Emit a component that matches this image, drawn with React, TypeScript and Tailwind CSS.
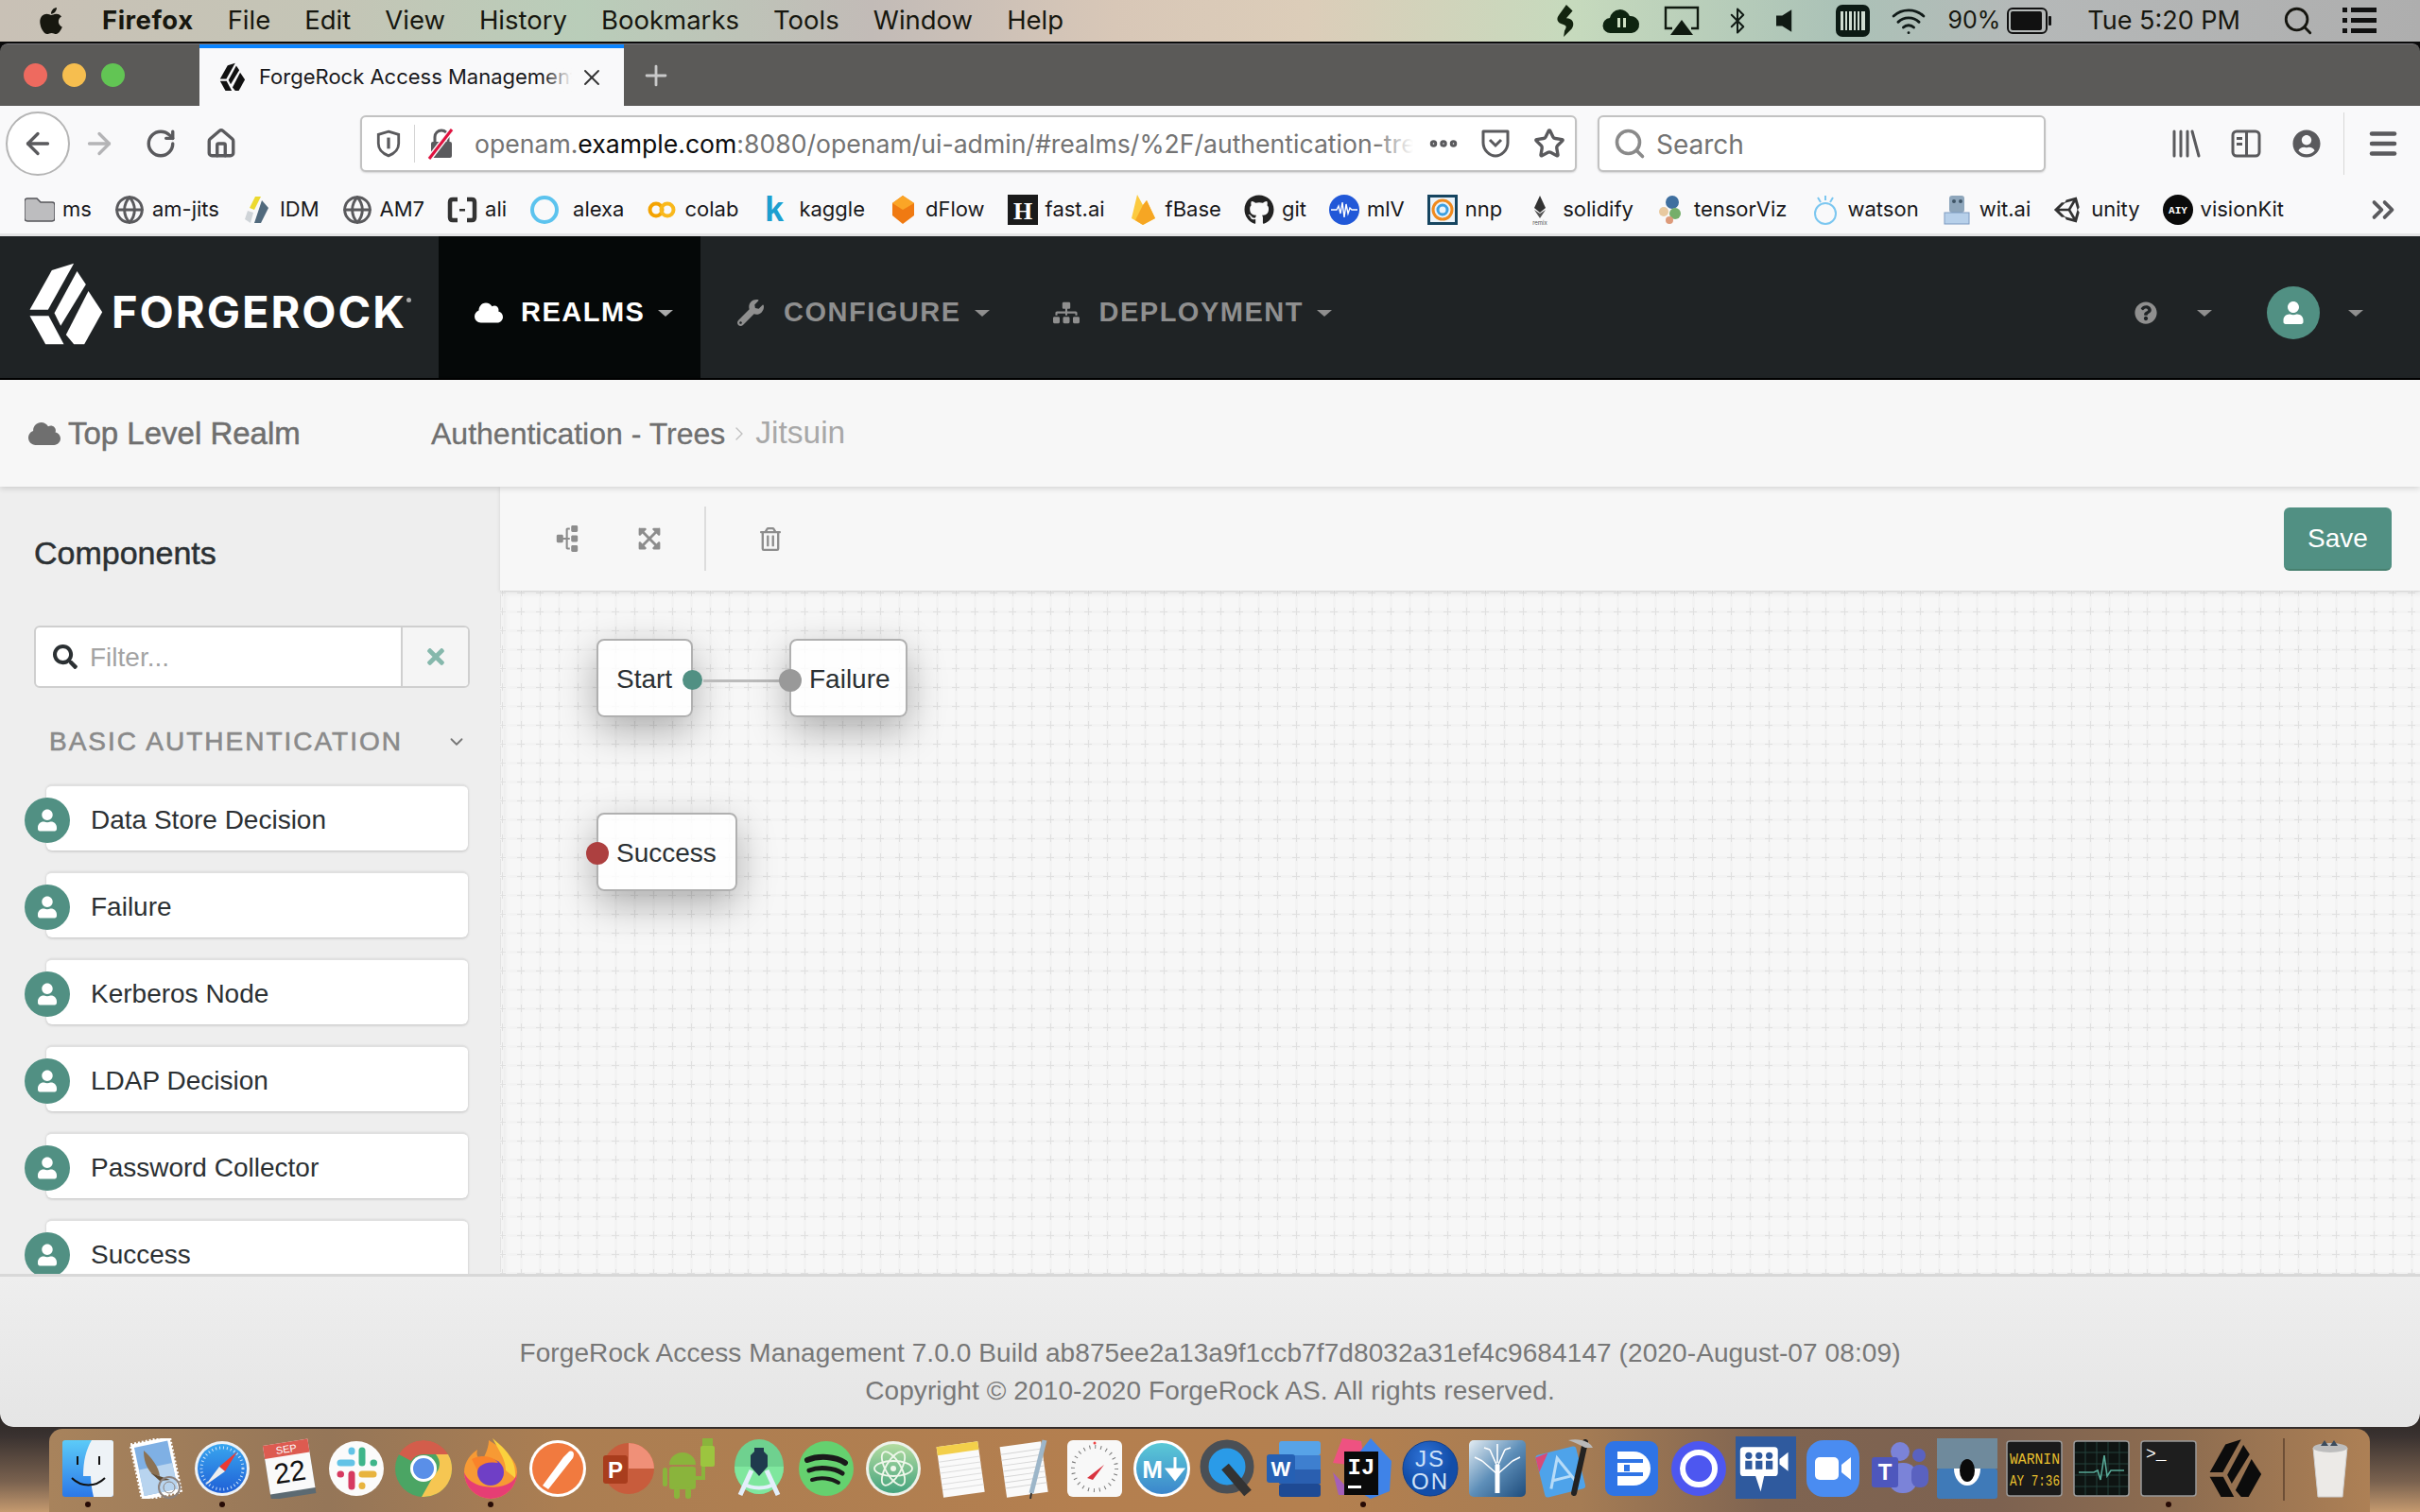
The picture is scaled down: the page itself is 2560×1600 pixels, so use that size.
import React from 'react';
import { ArrowLeft, ArrowRight, RotateCw, Home, Star, Menu, ChevronsRight, ChevronRight, Search, Globe, Bluetooth, Wifi, X, Plus, ChevronDown, Ellipsis } from 'lucide-react';
import { FaApple, FaCloud, FaWrench, FaSitemap, FaUser, FaQuestionCircle, FaSearch, FaTimes, FaExpandArrowsAlt, FaRegTrashAlt, FaGithub, FaUnity, FaUserCircle, FaFolder } from 'react-icons/fa';

const FrMark = ({ className }: { className?: string }) => (
  <svg viewBox="85 80 245 270" className={className} fill="currentColor">
    <polygon points="162,107 232,85 150,232 92,232" />
    <polygon points="242,110 270,152 190,283 170,243" />
    <polygon points="278,173 322,240 265,342 232,342 207,312" />
    <polygon points="92,252 152,252 200,342 142,342" />
  </svg>
);

const Caret = ({ className }: { className?: string }) => (
  <span className={`inline-block w-0 h-0 border-x-[8px] border-x-transparent border-t-[7px] border-t-[#8f8f8f] ${className ?? ''}`} />
);

const menuItems = ['File', 'Edit', 'View', 'History', 'Bookmarks', 'Tools', 'Window', 'Help'];

const MenuBar = () => (
  <div className="h-[44px] shrink-0 flex items-center pl-[40px] text-[27.5px] text-[#17170f] bg-[linear-gradient(90deg,#c9c1b6_0%,#c4c5b6_14%,#b9cdb9_24%,#c2bbb7_36%,#d8c7b7_46%,#dccdb9_54%,#c6dabd_65%,#abc2b7_76%,#b5b8b8_84%,#aeaeae_100%)]">
    <FaApple className="w-[28px] h-[32px] mr-[40px]" />
    <span className="font-bold tracking-[0.5px]">Firefox</span>
    {menuItems.map((m) => (
      <span key={m} className="ml-[36px]">{m}</span>
    ))}
    <div className="flex-1" />
    <svg viewBox="0 0 24 36" className="w-[24px] h-[34px]"><path d="M13 0 L20 7 L13 15 C20 15 23 21 19 27 L10 36 L11 29 C14 25 13 23 9 22 C3 20 1 16 5 11Z" fill="#13240f" /></svg>
    <svg viewBox="0 0 40 30" className="w-[40px] h-[30px] ml-[27px]"><path d="M9 28a8 8 0 0 1-1-16 11 11 0 0 1 21-2 9 9 0 0 1 2 18Z" fill="#0e2410" /><rect x="16" y="12" width="3" height="10" fill="#cfe0c4" /><rect x="22" y="12" width="3" height="10" fill="#cfe0c4" /></svg>
    <svg viewBox="0 0 38 32" className="w-[38px] h-[32px] ml-[25px]"><path d="M9 24H2V2H36V24H29" fill="none" stroke="#101a10" strokeWidth="2.4" /><polygon points="19,15 31,31 7,31" fill="#101a10" /></svg>
    <Bluetooth className="w-[30px] h-[36px] ml-[25px] text-[#101a14]" strokeWidth={1.6} />
    <svg viewBox="0 0 20 28" className="w-[18px] h-[26px] ml-[26px]"><polygon points="0,8 7,8 18,1 18,27 7,20 0,20" fill="#101a14" /></svg>
    <svg viewBox="0 0 36 34" className="w-[36px] h-[34px] ml-[45px]"><rect width="36" height="34" rx="7" fill="#0c1a14" /><rect x="5" y="7" width="3" height="20" fill="#cfdcd0" /><rect x="10" y="7" width="2" height="20" fill="#cfdcd0" /><rect x="14" y="7" width="3" height="20" fill="#cfdcd0" /><rect x="19" y="7" width="2" height="20" fill="#cfdcd0" /><rect x="23" y="7" width="2" height="20" fill="#cfdcd0" /><rect x="27" y="7" width="4" height="20" fill="#cfdcd0" /></svg>
    <Wifi className="w-[44px] h-[38px] ml-[19px] text-[#101a18]" strokeWidth={1.8} />
    <span className="ml-[20px] text-[25px]">90%</span>
    <svg viewBox="0 0 48 28" className="w-[48px] h-[28px] ml-[7px]"><rect x="1" y="1" width="41" height="26" rx="5" fill="none" stroke="#111" strokeWidth="2" /><rect x="4" y="4" width="33" height="20" rx="2" fill="#111" /><rect x="44" y="9" width="3" height="10" rx="1" fill="#111" /></svg>
    <span className="ml-[37px] text-[27px]">Tue 5:20 PM</span>
    <Search className="w-[34px] h-[34px] ml-[44px] text-[#15150f]" strokeWidth={2} />
    <svg viewBox="0 0 36 28" className="w-[36px] h-[28px] ml-[30px] mr-[46px]"><g fill="#111"><rect width="5" height="5" /><rect y="11" width="5" height="5" /><rect y="22" width="5" height="5" /><rect x="9" width="27" height="5" /><rect x="9" y="11" width="27" height="5" /><rect x="9" y="22" width="27" height="5" /></g></svg>
  </div>
);

const TabStrip = () => (
  <div className="h-[66px] shrink-0 flex bg-[#5b5a58] rounded-t-[8px] border-t border-[#77767a]">
    <div className="w-[211px] flex items-center pl-[25px] gap-[16px]">
      <span className="w-[25px] h-[25px] rounded-full bg-[#ee6a5f]" />
      <span className="w-[25px] h-[25px] rounded-full bg-[#f6be4f]" />
      <span className="w-[25px] h-[25px] rounded-full bg-[#62c554]" />
    </div>
    <div className="w-[449px] bg-[#f9f9fa] border-t-[4px] border-[#0a84ff] flex items-center pl-[21px]">
      <FrMark className="w-[28px] h-[31px] text-[#111] shrink-0" />
      <div className="relative w-[331px] ml-[14px] overflow-hidden whitespace-nowrap text-[22px] text-[#18181a]">
        ForgeRock Access Management 7
        <span className="absolute right-0 top-0 bottom-0 w-[30px] bg-gradient-to-r from-transparent to-[#f9f9fa]" />
      </div>
      <X className="w-[28px] h-[28px] ml-[7px] text-[#333]" strokeWidth={1.6} />
    </div>
    <div className="flex items-center ml-[17px]">
      <Plus className="w-[34px] h-[34px] text-[#c9c9c9]" strokeWidth={2} />
    </div>
  </div>
);

const UrlBar = () => (
  <div className="h-[80px] shrink-0 bg-[#f9f9fa] flex items-center text-[#5a5a5d]">
    <div className="w-[68px] h-[68px] ml-[6px] rounded-full border-2 border-[#b5b5b5] bg-white flex items-center justify-center">
      <ArrowLeft className="w-[36px] h-[36px]" strokeWidth={2.2} />
    </div>
    <ArrowRight className="w-[36px] h-[36px] ml-[13px] text-[#b4b4b6]" strokeWidth={2.2} />
    <RotateCw className="w-[34px] h-[34px] ml-[30px]" strokeWidth={2.4} />
    <Home className="w-[34px] h-[34px] ml-[30px]" strokeWidth={2.4} />
    <div className="w-[1287px] h-[60px] ml-[130px] rounded-[6px] border-2 border-[#c2c2c2] bg-white flex items-center shadow-[0_1px_2px_rgba(0,0,0,0.15)]">
      <svg viewBox="0 0 24 28" className="w-[26px] h-[30px] ml-[15px] shrink-0"><path d="M12 2 L22 5 V14 C22 20 17 24 12 26 C7 24 2 20 2 14 V5Z" fill="none" stroke="#5a5a5d" strokeWidth="2.6" /><rect x="10.5" y="8" width="3" height="11" fill="#5a5a5d" /></svg>
      <span className="w-px h-[40px] bg-[#d4d4d4] ml-[14px] shrink-0" />
      <svg viewBox="0 0 30 34" className="w-[30px] h-[34px] ml-[13px] shrink-0"><path d="M8 15V10a7 7 0 0 1 14 0v5" fill="none" stroke="#5a5a5d" strokeWidth="3" /><rect x="4" y="15" width="22" height="17" rx="2" fill="#5a5a5d" /><line x1="2" y1="33" x2="26" y2="2" stroke="#f9f9fa" strokeWidth="6" /><line x1="2" y1="33" x2="26" y2="2" stroke="#e0123f" strokeWidth="3" /></svg>
      <div className="relative w-[993px] ml-[20px] pt-[2px] overflow-hidden whitespace-nowrap text-[26.6px] text-[#737373]">
        openam.<span className="text-[#0c0c0d]">example.com</span>:8080/openam/ui-admin/#realms/%2F/authentication-trees
        <span className="absolute right-0 top-0 bottom-0 w-[40px] bg-gradient-to-r from-transparent to-white" />
      </div>
      <Ellipsis className="w-[36px] h-[36px] ml-[14px]" strokeWidth={3} />
      <svg viewBox="0 0 32 32" className="w-[32px] h-[32px] ml-[21px]"><path d="M3 3H29V15C29 23 22 29 16 29C10 29 3 23 3 15Z" fill="none" stroke="#5a5a5d" strokeWidth="3" strokeLinejoin="round" /><path d="M10 12 L16 18 L22 12" fill="none" stroke="#5a5a5d" strokeWidth="3" /></svg>
      <Star className="w-[34px] h-[34px] ml-[24px]" strokeWidth={2.4} />
    </div>
    <div className="w-[474px] h-[60px] ml-[22px] rounded-[6px] border-2 border-[#c2c2c2] bg-white flex items-center text-[28px] text-[#737373] shadow-[0_1px_2px_rgba(0,0,0,0.15)]">
      <Search className="w-[36px] h-[36px] ml-[14px] text-[#8a8a8a]" strokeWidth={2.4} />
      <span className="ml-[10px] pt-[2px]">Search</span>
    </div>
    <svg viewBox="0 0 32 32" className="w-[32px] h-[32px] ml-[133px]"><g stroke="#5a5a5d" strokeWidth="3" strokeLinecap="round"><line x1="3" y1="3" x2="3" y2="29" /><line x1="10" y1="3" x2="10" y2="29" /><line x1="17" y1="3" x2="17" y2="29" /><line x1="22" y1="3" x2="29" y2="29" /></g></svg>
    <svg viewBox="0 0 32 32" className="w-[32px] h-[32px] ml-[31px]"><rect x="2" y="3" width="28" height="26" rx="4" fill="none" stroke="#5a5a5d" strokeWidth="3" /><rect x="15" y="3" width="3" height="26" fill="#5a5a5d" /><rect x="6" y="9" width="6" height="3" fill="#5a5a5d" /><rect x="6" y="15" width="6" height="3" fill="#5a5a5d" /></svg>
    <FaUserCircle className="w-[30px] h-[30px] ml-[33px]" />
    <span className="w-px h-[66px] bg-[#d8d8d8] ml-[24px]" />
    <Menu className="w-[36px] h-[36px] ml-[23px]" strokeWidth={3} />
  </div>
);

const Box = ({ children, v = '0 0 32 32' }: { children: React.ReactNode; v?: string }) => (
  <svg viewBox={v} className="w-[32px] h-[32px] shrink-0">{children}</svg>
);

const bookmarks: { label: string; gap?: string; icon: React.ReactNode }[] = [
  { label: 'ms', icon: <FaFolder className="w-[32px] h-[32px] text-[#bdbdbf] stroke-[#55555a] stroke-[24px]" /> },
  { label: 'am-jits', icon: <Globe className="w-[32px] h-[32px] text-[#5a5a5d]" strokeWidth={2.2} /> },
  { label: 'IDM', icon: <Box><polygon points="14,2 20,2 13,16 8,14" fill="#ecd92f" /><polygon points="6,17 12,19 9,30 3,26" fill="#cfd4d8" /><polygon points="21,6 28,14 20,30 13,30" fill="#516a7d" /></Box> },
  { label: 'AM7', icon: <Globe className="w-[32px] h-[32px] text-[#5a5a5d]" strokeWidth={2.2} /> },
  { label: 'ali', icon: <Box><path d="M11 5H6Q3 5 3 8V24Q3 27 6 27H11M21 5H26Q29 5 29 8V24Q29 27 26 27H21" fill="none" stroke="#333" strokeWidth="4.5" /><rect x="13" y="15" width="6" height="2.5" fill="#333" /></Box> },
  { label: 'alexa', gap: 'gap-[14px]', icon: <Box><circle cx="16" cy="16" r="13" fill="none" stroke="#5cc3ee" strokeWidth="4" /></Box> },
  { label: 'colab', icon: <Box><circle cx="10" cy="16" r="6.5" fill="none" stroke="#f4a300" strokeWidth="4" /><circle cx="22" cy="16" r="6.5" fill="none" stroke="#f9b81c" strokeWidth="4" /></Box> },
  { label: 'kaggle', icon: <Box><text x="14" y="28" textAnchor="middle" fontSize="36" fontWeight="bold" fontFamily="Liberation Sans, sans-serif" fill="#1d9fd0">k</text></Box> },
  { label: 'dFlow', icon: <Box><polygon points="16,1 28,9 28,22 16,31 5,22 5,9" fill="#f07a12" /><polygon points="16,1 28,9 16,16 5,9" fill="#fba526" /></Box> },
  { label: 'fast.ai', icon: <Box><rect width="32" height="32" fill="#1a1a1a" /><text x="16" y="26" textAnchor="middle" fontSize="26" fontWeight="bold" fontFamily="Liberation Serif, serif" fill="#fff">H</text></Box> },
  { label: 'fBase', icon: <Box><polygon points="4,25 10,0 16,11 20,6 29,25 16,32" fill="#fcca3f" /><polygon points="16,11 20,6 29,25 16,32 8,27" fill="#f6a623" /></Box> },
  { label: 'git', icon: <FaGithub className="w-[32px] h-[32px] text-[#222]" /> },
  { label: 'mlV', icon: <Box><circle cx="16" cy="16" r="16" fill="#2158d8" /><path d="M2 16h6l2-4 2 8 2-12 2 16 2-14 2 10 2-6 2 2h6" fill="none" stroke="#fff" strokeWidth="1.4" /></Box> },
  { label: 'nnp', icon: <Box><rect width="32" height="32" fill="#164560" /><rect x="3" y="3" width="26" height="26" fill="#eaf3fa" /><circle cx="16" cy="16" r="10" fill="none" stroke="#f08a1d" strokeWidth="3" /><circle cx="16" cy="16" r="5" fill="none" stroke="#3d9fe0" strokeWidth="3" /></Box> },
  { label: 'solidify', icon: <Box><polygon points="16,1 22,14 16,19 10,14" fill="#333" /><polygon points="10,16 16,20 22,16 16,25" fill="#555" /><text x="16" y="32" textAnchor="middle" fontSize="6" fontFamily="Inter, sans-serif" fill="#555">remix</text></Box> },
  { label: 'tensorViz', icon: <Box><circle cx="17" cy="8" r="7" fill="#3f6f9f" /><circle cx="8" cy="18" r="5" fill="#e8c9a0" /><circle cx="20" cy="20" r="6" fill="#75ae6a" /><circle cx="14" cy="27" r="4" fill="#dd9a7a" /></Box> },
  { label: 'watson', icon: <Box><circle cx="16" cy="20" r="11" fill="none" stroke="#7cc7f0" strokeWidth="2" /><path d="M16 1v5M8 3l3 5M24 3l-3 5" stroke="#7cc7f0" strokeWidth="2" /></Box> },
  { label: 'wit.ai', icon: <Box><rect x="8" y="1" width="16" height="18" rx="3" fill="#8ea6bb" /><circle cx="13" cy="7" r="2" fill="#3f5566" /><circle cx="20" cy="7" r="2" fill="#3f5566" /><rect x="3" y="19" width="26" height="12" fill="#b7d0ea" stroke="#7d9ac0" /></Box> },
  { label: 'unity', icon: <FaUnity className="w-[32px] h-[32px] text-[#333]" /> },
  { label: 'visionKit', icon: <Box><circle cx="16" cy="16" r="16" fill="#0a0a0a" /><text x="16" y="20" textAnchor="middle" fontSize="11" fontWeight="bold" fontFamily="Liberation Mono, monospace" fill="#fff">AIY</text></Box> },
];

const BookmarksBar = () => (
  <div className="h-[58px] shrink-0 pt-[4px] pl-[26px] bg-[#f9f9fa] border-b-[3px] border-[#e4e4e5] flex items-center gap-[24px] text-[22px] text-[#18181a] whitespace-nowrap">
    {bookmarks.map((b) => (
      <div key={b.label} className={`flex items-center ${b.gap ?? 'gap-[8px]'}`}>
        {b.icon}
        <span>{b.label}</span>
      </div>
    ))}
    <div className="flex-1" />
    <ChevronsRight className="w-[38px] h-[38px] mr-[20px] text-[#5a5a5d]" strokeWidth={2.4} />
  </div>
);

const NavBar = () => (
  <div className="h-[152px] shrink-0 pt-[12px] bg-[#1f2325] border-b-[2px] border-black flex items-center text-[#8f8f8f] text-[29px] font-bold font-['Liberation_Sans',sans-serif] tracking-[1.5px]">
    <div className="w-[464px] h-[150px] -mt-[12px] pt-[10px] flex items-center pl-[29px] text-white">
      <FrMark className="w-[82px] h-[90px] -translate-y-[8px]" />
      <span className="ml-[7px] text-[47px] font-bold tracking-[2px] font-['Inter',sans-serif]">FORGEROCK</span>
      <span className="w-[5px] h-[5px] rounded-full bg-[#aaa] -mt-[26px]" />
    </div>
    <div className="w-[277px] h-[150px] -mt-[12px] pt-[12px] bg-[#050808] flex items-center pl-[38px] text-white">
      <FaCloud className="w-[30px] h-[30px]" />
      <span className="ml-[19px]">REALMS</span>
      <Caret className="ml-[14px] !border-t-[#aaa]" />
    </div>
    <FaWrench className="w-[28px] h-[28px] ml-[39px]" />
    <span className="ml-[21px]">CONFIGURE</span>
    <Caret className="ml-[14px]" />
    <FaSitemap className="w-[28px] h-[28px] ml-[67px]" />
    <span className="ml-[21px]">DEPLOYMENT</span>
    <Caret className="ml-[14px]" />
    <div className="flex-1" />
    <FaQuestionCircle className="w-[24px] h-[24px]" />
    <Caret className="ml-[42px]" />
    <div className="w-[56px] h-[56px] ml-[58px] rounded-full bg-[#519083] flex items-center justify-center">
      <FaUser className="w-[22px] h-[24px] text-white" />
    </div>
    <Caret className="ml-[30px] mr-[60px]" />
  </div>
);

const SubHeader = () => (
  <div className="h-[113px] shrink-0 relative z-10 bg-[#f7f7f7] flex items-center font-['Liberation_Sans',sans-serif] shadow-[0_2px_6px_rgba(0,0,0,0.14)]">
    <div className="w-[456px] flex items-center pl-[30px] text-[#6f6f6f]">
      <FaCloud className="w-[34px] h-[34px]" />
      <span className="ml-[8px] text-[33px] [-webkit-text-stroke:0.5px_#6f6f6f]">Top Level Realm</span>
    </div>
    <span className="text-[32px] text-[#6f6f6f] [-webkit-text-stroke:0.3px_#6f6f6f]">Authentication - Trees</span>
    <ChevronRight className="ml-[3px] w-[24px] h-[34px] text-[#c0c0c0]" strokeWidth={1.4} />
    <span className="ml-[5px] text-[33.5px] text-[#a8a8a8]">Jitsuin</span>
  </div>
);

const components = ['Data Store Decision', 'Failure', 'Kerberos Node', 'LDAP Decision', 'Password Collector', 'Success'];

const Sidebar = () => (
  <div className="w-[529px] shrink-0 bg-[#eeeeee] pl-[36px] pr-[32px] pt-[48px] overflow-hidden">
    <div className="text-[34px] leading-[44px] text-[#2b3033] [-webkit-text-stroke:0.5px_#2b3033]">Components</div>
    <div className="mt-[55px] h-[66px] flex rounded-[6px] border-2 border-[#cfcfcf] bg-white overflow-hidden">
      <div className="flex-1 flex items-center pl-[18px]">
        <FaSearch className="w-[26px] h-[26px] text-[#2b3033]" />
        <span className="ml-[13px] pt-[2px] text-[28px] text-[#a3a3a3]">Filter...</span>
      </div>
      <div className="w-[71px] bg-[#f5f5f5] border-l-2 border-[#cfcfcf] flex items-center justify-center">
        <FaTimes className="w-[22px] h-[26px] text-[#86b8ac]" />
      </div>
    </div>
    <div className="mt-[37px] h-[40px] flex items-center justify-between pl-[16px] pr-[3px]">
      <span className="text-[28px] text-[#8a8a8a] tracking-[2px] [-webkit-text-stroke:0.6px_#8a8a8a]">BASIC AUTHENTICATION</span>
      <ChevronDown className="w-[22px] h-[22px] text-[#777]" strokeWidth={2} />
    </div>
    <div className="mt-[25px] ml-[13px] mr-[2px] flex flex-col gap-[22px]">
      {components.map((c) => (
        <div key={c} className="relative shrink-0 h-[70px] pt-[3px] rounded-[6px] bg-white border-t-2 border-[#e0e0e0] shadow-[0_1px_3px_rgba(0,0,0,0.2)] flex items-center pl-[47px] text-[28px] text-[#2b3033]">
          <div className="absolute -left-[23px] top-[12px] w-[48px] h-[48px] rounded-full bg-[#519083] flex items-center justify-center">
            <FaUser className="w-[20px] h-[24px] text-white" />
          </div>
          {c}
        </div>
      ))}
    </div>
  </div>
);

const nodeClass = 'absolute h-[83px] pt-[2px] rounded-[8px] border-2 border-[#b0b0b0] bg-white/85 shadow-[0_14px_40px_rgba(0,0,0,0.3)] flex items-center text-[28px] text-[#2b3033]';

const Canvas = () => (
  <div className="relative flex-1 bg-[#f7f7f7] overflow-hidden shadow-[inset_8px_6px_8px_-6px_rgba(0,0,0,0.12)]">
    <svg className="absolute inset-0 w-full h-full">
      <defs>
        <pattern id="grid" width="20" height="20" patternUnits="userSpaceOnUse">
          <rect x="1" y="0" width="3" height="20" fill="#f3f3f3" />
          <rect x="0" y="1" width="20" height="3" fill="#f3f3f3" />
          <rect x="2" y="0" width="1" height="6" fill="#e0e0e0" />
          <rect x="0" y="2" width="6" height="1" fill="#e0e0e0" />
          <rect x="18" y="2" width="2" height="1" fill="#e0e0e0" />
          <rect x="2" y="18" width="1" height="2" fill="#e0e0e0" />
        </pattern>
      </defs>
      <rect width="100%" height="100%" fill="url(#grid)" />
    </svg>
    <div className={`${nodeClass} left-[102px] top-[51px] w-[102px] pl-[19px]`}>
      Start
      <span className="absolute -right-[12px] top-[31px] w-[21px] h-[21px] rounded-full bg-[#519083]" />
    </div>
    <div className="absolute left-[215px] top-[94px] w-[82px] h-[3px] bg-[#bbbbbb]" />
    <div className={`${nodeClass} left-[306px] top-[51px] w-[125px] pl-[19px]`}>
      Failure
      <span className="absolute -left-[13px] top-[30px] w-[24px] h-[24px] rounded-full bg-[#999999]" />
    </div>
    <div className={`${nodeClass} left-[102px] top-[235px] w-[149px] pl-[19px]`}>
      Success
      <span className="absolute -left-[13px] top-[29px] w-[24px] h-[24px] rounded-full bg-[#ad4040]" />
    </div>
  </div>
);

const Workspace = () => (
  <div className="flex-1 min-w-0 flex flex-col">
    <div className="relative z-[1] h-[110px] shrink-0 bg-[#f7f7f7] flex items-center text-[#8d8d8d] shadow-[0_1px_4px_rgba(0,0,0,0.12)]">
      <FaSitemap className="w-[28px] h-[28px] ml-[57px] -rotate-90" />
      <FaExpandArrowsAlt className="w-[26px] h-[26px] ml-[60px]" />
      <span className="w-[2px] h-[68px] bg-[#dddddd] ml-[45px]" />
      <FaRegTrashAlt className="w-[22px] h-[25px] ml-[57px]" />
      <div className="flex-1" />
      <button className="w-[114px] h-[67px] pt-[2px] mr-[30px] rounded-[6px] bg-[#519083] border-b-2 border-[#47806f] text-white text-[28px]">Save</button>
    </div>
    <Canvas />
  </div>
);

const Footer = () => (
  <div className="h-[162px] shrink-0 rounded-b-[14px] border-t-[3px] border-[#d8d8d8] bg-gradient-to-b from-[#eeeeee] to-[#e5e5e5] pt-[61px] text-center text-[28px] tracking-[0.1px] leading-[40px] text-[#777777] font-['Liberation_Sans',sans-serif]">
    <div>ForgeRock Access Management 7.0.0 Build ab875ee2a13a9f1ccb7f7d8032a31ef4c9684147 (2020-August-07 08:09)</div>
    <div>Copyright © 2010-2020 ForgeRock AS. All rights reserved.</div>
  </div>
);

const Ico = ({ children }: { children: React.ReactNode }) => (
  <svg viewBox="0 0 64 64" className="w-[64px] h-[64px]">{children}</svg>
);

const mono = 'Liberation Mono, monospace';
const sans = 'Liberation Sans, sans-serif';

const dockIcons: { name: string; running?: boolean; icon: React.ReactNode }[] = [
  { name: 'finder', running: true, icon: <Ico><defs><linearGradient id="fd" x1="0" y1="0" x2="0" y2="1"><stop offset="0" stopColor="#5ccbf8" /><stop offset="1" stopColor="#2b78e8" /></linearGradient></defs><rect x="5" y="2" width="54" height="60" rx="3" fill="url(#fd)" /><path d="M36 2H56Q59 2 59 5V59Q59 62 56 62H38C36 54 35 46 35 40H27C27 24 30 12 36 2Z" fill="#eef3f7" /><rect x="20" y="19" width="2" height="9" fill="#111" /><rect x="43" y="19" width="2" height="9" fill="#111" /><path d="M15 42C25 52 40 52 50 42" fill="none" stroke="#111" strokeWidth="2" /></Ico> },
  { name: 'mail', icon: <Ico><g transform="rotate(-12 32 32)"><rect x="12" y="2" width="42" height="60" fill="#fff" stroke="#fff" strokeDasharray="2 2" strokeWidth="3" /><rect x="15" y="6" width="36" height="52" fill="#7fb0e4" /><rect x="15" y="30" width="36" height="28" fill="#b8d4ef" /></g><path d="M20 13C28 20 36 30 37 40L29 38C22 30 20 22 20 13Z" fill="#8b7152" /><path d="M28 37L48 44L37 45Z" fill="#5e4a32" /><circle cx="47" cy="52" r="11" fill="none" stroke="#8b817c" strokeWidth="2" /><circle cx="47" cy="52" r="6" fill="none" stroke="#8b817c" /></Ico> },
  { name: 'safari', running: true, icon: <Ico><circle cx="32" cy="32" r="29" fill="#eef2f6" /><defs><linearGradient id="sf" x1="0" y1="0" x2="0" y2="1"><stop offset="0" stopColor="#39a6ef" /><stop offset="1" stopColor="#1f5fd6" /></linearGradient></defs><circle cx="32" cy="32" r="26" fill="url(#sf)" /><circle cx="32" cy="32" r="22" fill="none" stroke="#cfe6fa" strokeWidth="3" strokeDasharray="1 3" /><polygon points="48,14 29,30 35,35" fill="#ee3a32" /><polygon points="14,50 29,30 35,35" fill="#eee" /></Ico> },
  { name: 'calendar', icon: <Ico><g transform="rotate(-9 32 32)"><rect x="8" y="6" width="48" height="56" fill="#5c6a72" /><rect x="8" y="4" width="48" height="52" fill="#fafafa" /><rect x="8" y="4" width="48" height="14" fill="#dd5b50" /><text x="32" y="15" textAnchor="middle" fontSize="11" fontFamily={sans} fill="#fff">SEP</text><text x="32" y="46" textAnchor="middle" fontSize="30" fontFamily={sans} fill="#111">22</text></g></Ico> },
  { name: 'slack', icon: <Ico><circle cx="32" cy="32" r="29" fill="#fbfbfb" /><g strokeWidth="7" strokeLinecap="round" fill="none"><path d="M15 26H27" stroke="#63c3e6" /><path d="M27 13V14" stroke="#63c3e6" /><path d="M38 13V26" stroke="#3fb58a" /><path d="M50 26H50.5" stroke="#3fb58a" /><path d="M38 38H50" stroke="#e8b43f" /><path d="M38 50V50.5" stroke="#e8b43f" /><path d="M27 38V51" stroke="#d63a60" /><path d="M15 38H15.5" stroke="#d63a60" /></g></Ico> },
  { name: 'chrome', icon: <Ico><circle cx="32" cy="32" r="30" fill="#4ba564" /><path d="M32 2A30 30 0 0 1 58 17H32A15 15 0 0 0 19 24L6 17A30 30 0 0 1 32 2Z" fill="#d35d4b" /><path d="M58 17A30 30 0 0 1 30 62L43 39A15 15 0 0 0 45 17Z" fill="#f6c652" /><circle cx="32" cy="32" r="14" fill="#fff" /><circle cx="32" cy="32" r="11" fill="#5a8fe8" /></Ico> },
  { name: 'firefox', running: true, icon: <Ico><path d="M30 2C50 14 60 24 60 36A28 28 0 1 1 4 36C4 24 12 16 18 12C16 20 20 22 24 22C28 14 30 8 30 2Z" fill="#f79a34" /><path d="M4 36A28 28 0 0 0 60 36C58 56 12 58 4 36Z" fill="#e63e74" /><path d="M34 0C46 10 60 22 58 42L48 34C48 22 40 12 34 0Z" fill="#fbd13d" /><circle cx="32" cy="36" r="14" fill="#6f3fc6" /><path d="M12 22C24 16 36 20 40 26C28 24 20 28 18 34Z" fill="#f9822a" /></Ico> },
  { name: 'postman', icon: <Ico><circle cx="32" cy="32" r="30" fill="#fff" /><circle cx="32" cy="32" r="27" fill="#f17a3f" /><path d="M16 50L38 20L44 14C49 12 50 17 48 21L44 26L22 54Z" fill="#fff" /></Ico> },
  { name: 'powerpoint', icon: <Ico><circle cx="36" cy="32" r="27" fill="#c85c3c" /><path d="M36 5A27 27 0 0 1 63 32H36Z" fill="#f09078" /><rect x="9" y="18" width="26" height="30" rx="3" fill="#a93d1d" /><text x="22" y="42" textAnchor="middle" fontSize="24" fontWeight="bold" fontFamily={sans} fill="#fff">P</text></Ico> },
  { name: 'android', icon: <Ico><rect x="43" y="0" width="11" height="8" fill="#8ab43c" /><rect x="41" y="8" width="15" height="22" rx="2" fill="#9cc53f" /><path d="M36 42H44V30" fill="none" stroke="#8ab43c" strokeWidth="4" /><path d="M8 28A14 13 0 0 1 36 28Z" fill="#8ab43c" /><rect x="8" y="30" width="28" height="24" rx="3" fill="#8ab43c" /><rect x="1" y="31" width="5" height="20" rx="2.5" fill="#8ab43c" /><rect x="13" y="52" width="6" height="12" rx="3" fill="#8ab43c" /><rect x="25" y="52" width="6" height="12" rx="3" fill="#8ab43c" /></Ico> },
  { name: 'studio', icon: <Ico><ellipse cx="32" cy="30" rx="26" ry="29" fill="#6fd18f" /><path d="M6 30H58A26 29 0 0 1 6 30Z" fill="#7fe79e" /><path d="M27 10H37V14L41 18V30L32 40L23 30V18L27 14Z" fill="#1f3a4d" /><path d="M24 34L12 60M40 34L52 60" stroke="#e3effb" strokeWidth="5" /><path d="M16 48C24 54 40 54 48 48" fill="none" stroke="#e3effb" strokeWidth="4" /></Ico> },
  { name: 'spotify', icon: <Ico><circle cx="32" cy="32" r="29" fill="#65d16f" /><g fill="none" stroke="#1a1a1a" strokeLinecap="round"><path d="M12 23C24 18 42 19 52 26" strokeWidth="6" /><path d="M14 34C24 30 40 31 49 37" strokeWidth="5" /><path d="M17 44C26 41 37 42 45 47" strokeWidth="4" /></g></Ico> },
  { name: 'atom', icon: <Ico><circle cx="32" cy="32" r="29" fill="#eef2ea" /><defs><linearGradient id="at" x1="0" y1="0" x2="0" y2="1"><stop offset="0" stopColor="#b3dca1" /><stop offset="1" stopColor="#44a37e" /></linearGradient></defs><circle cx="32" cy="32" r="26" fill="url(#at)" /><g fill="none" stroke="#eef7ea" strokeWidth="1.8"><ellipse cx="32" cy="32" rx="20" ry="8" /><ellipse cx="32" cy="32" rx="20" ry="8" transform="rotate(60 32 32)" /><ellipse cx="32" cy="32" rx="20" ry="8" transform="rotate(120 32 32)" /></g><circle cx="32" cy="32" r="3" fill="#eef7ea" /></Ico> },
  { name: 'notes', icon: <Ico><g transform="rotate(-8 32 32)"><rect x="10" y="6" width="44" height="54" fill="#fafafa" /><rect x="10" y="6" width="44" height="9" fill="#f3cf4a" /><path d="M10 22H54M10 28H54M10 34H54M10 40H54M10 46H54M10 52H54" stroke="#ddd" /></g></Ico> },
  { name: 'textedit', icon: <Ico><g transform="rotate(-8 28 32)"><rect x="6" y="6" width="44" height="54" fill="#fafafa" /><path d="M6 14H50M6 20H50M6 26H50M6 32H50M6 38H50M6 44H50M6 50H50" stroke="#d5d5d5" /></g><path d="M50 2L36 58" stroke="#9db6c9" strokeWidth="5" /><path d="M36 58L35 64" stroke="#333" strokeWidth="2" /></Ico> },
  { name: 'clock', icon: <Ico><rect x="3" y="2" width="58" height="60" rx="6" fill="#f8f8f8" /><circle cx="32" cy="32" r="23" fill="none" stroke="#777" strokeWidth="4" strokeDasharray="1 5" /><circle cx="32" cy="5" r="1.5" fill="#e44" /><path d="M24 42L42 28L30 44Z" fill="#d9333f" /></Ico> },
  { name: 'markdown', icon: <Ico><circle cx="32" cy="32" r="30" fill="#fff" /><defs><linearGradient id="md" x1="0" y1="0" x2="0" y2="1"><stop offset="0" stopColor="#5bc9d6" /><stop offset="1" stopColor="#3b86cc" /></linearGradient></defs><circle cx="32" cy="32" r="27" fill="url(#md)" /><text x="22" y="42" textAnchor="middle" fontSize="26" fontWeight="bold" fontFamily={sans} fill="#fff">M</text><path d="M46 20V36M38 33L46 43L54 33Z" fill="#fff" stroke="#fff" strokeWidth="3" /></Ico> },
  { name: 'quicktime', icon: <Ico><circle cx="30" cy="30" r="24" fill="#2a9be8" stroke="#4a4f55" strokeWidth="9" /><path d="M28 30L52 58" stroke="#333" strokeWidth="10" /></Ico> },
  { name: 'word', icon: <Ico><rect x="14" y="3" width="44" height="15" rx="3" fill="#57a3e7" /><rect x="14" y="18" width="44" height="15" fill="#3e7fcf" /><rect x="14" y="33" width="44" height="15" fill="#2a5fb0" /><rect x="14" y="48" width="44" height="14" rx="3" fill="#1e4a94" /><rect x="1" y="17" width="30" height="30" rx="3" fill="#2560b4" /><text x="16" y="40" textAnchor="middle" fontSize="22" fontWeight="bold" fontFamily={sans} fill="#fff">W</text></Ico> },
  { name: 'intellij', running: true, icon: <Ico><polygon points="10,0 30,3 34,30 0,26" fill="#ee5281" /><polygon points="40,0 62,24 60,56 40,64 20,52 24,20" fill="#3f83e8" /><polygon points="0,36 22,60 6,60" fill="#a45fb8" /><rect x="12" y="14" width="36" height="46" fill="#0a0a0a" /><text x="30" y="38" textAnchor="middle" fontSize="24" fontWeight="bold" fontFamily={mono} fill="#fff">IJ</text><rect x="16" y="50" width="14" height="3" fill="#fff" /></Ico> },
  { name: 'json', icon: <Ico><defs><radialGradient id="js" cx="0.4" cy="0.3"><stop offset="0" stopColor="#2f73d8" /><stop offset="1" stopColor="#124da8" /></radialGradient></defs><circle cx="32" cy="32" r="29" fill="url(#js)" stroke="#0e3f8f" /><text x="32" y="30" textAnchor="middle" fontSize="24" letterSpacing="2" fontFamily={sans} fill="#cfe2f8">JS</text><text x="32" y="54" textAnchor="middle" fontSize="24" letterSpacing="2" fontFamily={sans} fill="#cfe2f8">ON</text></Ico> },
  { name: 'tree', icon: <Ico><defs><linearGradient id="tr" x1="0" y1="0" x2="1" y2="1"><stop offset="0" stopColor="#e4edf3" /><stop offset="0.5" stopColor="#5e8fb9" /><stop offset="1" stopColor="#1e4c7c" /></linearGradient></defs><rect x="2" y="2" width="60" height="60" rx="5" fill="url(#tr)" /><g stroke="#fff" fill="none"><path d="M32 58V28" strokeWidth="5" /><path d="M32 38L16 24M32 38L48 24M32 30L24 12M32 30L40 12M32 26V6M16 24L8 20M48 24L56 20M24 12L18 10M40 12L46 10" strokeWidth="1.6" /></g></Ico> },
  { name: 'xcode', icon: <Ico><g transform="rotate(-14 30 36)"><rect x="6" y="12" width="44" height="46" rx="3" fill="#4ea3ea" /><path d="M14 50L28 20L42 50M18 42H38" fill="none" stroke="#b7dcf8" strokeWidth="3" /><polygon points="6,14 20,12 6,30" fill="#d84a78" /></g><path d="M54 4L42 58" stroke="#222" strokeWidth="6" strokeLinecap="round" /><path d="M36 2C46 0 58 2 62 10L54 10L50 8C46 6 42 4 36 2Z" fill="#b9b9b9" /></Ico> },
  { name: 'dash', icon: <Ico><rect x="4" y="3" width="56" height="58" rx="9" fill="#2f74e6" /><path d="M17 14H34A18 18 0 0 1 52 32A18 18 0 0 1 34 50H17" fill="#fff" /><g fill="#2f74e6"><rect x="14" y="22" width="30" height="4" /><rect x="14" y="36" width="30" height="4" /><rect x="24" y="28" width="6" height="7" /></g></Ico> },
  { name: 'ring', icon: <Ico><circle cx="32" cy="32" r="29" fill="#4d57f0" /><circle cx="32" cy="32" r="17" fill="none" stroke="#fff" strokeWidth="6" /></Ico> },
  { name: 'chat', icon: <div className="w-[66px] h-[66px] -mt-[2px] bg-[#2f5a9e] flex items-center justify-center"><svg viewBox="0 0 64 64" className="w-[58px] h-[58px]"><path d="M6 8H42Q46 8 46 12V38Q46 42 42 42H30L26 60L20 42H6Q2 42 2 38V12Q2 8 6 8Z" fill="#fff" /><path d="M48 22L58 14V36L48 28Z" fill="#fff" /><g fill="#2f5a9e"><circle cx="12" cy="18" r="4" /><circle cx="24" cy="18" r="4" /><circle cx="36" cy="18" r="4" /><rect x="8" y="24" width="8" height="10" /><rect x="20" y="24" width="8" height="10" /><rect x="32" y="24" width="8" height="10" /></g></svg></div> },
  { name: 'zoom', icon: <Ico><rect x="4" y="2" width="56" height="60" rx="18" fill="#4a8cf1" /><rect x="13" y="20" width="25" height="24" rx="5" fill="#fff" /><polygon points="41,28 51,20 51,44 41,36" fill="#fff" /></Ico> },
  { name: 'teams', icon: <Ico><circle cx="32" cy="14" r="10" fill="#7b83d8" /><circle cx="52" cy="18" r="7" fill="#5a62c0" /><rect x="20" y="26" width="30" height="32" rx="14" fill="#7b83d8" /><rect x="44" y="28" width="18" height="24" rx="8" fill="#5a62c0" /><rect x="2" y="20" width="28" height="32" rx="3" fill="#4e57bd" /><text x="16" y="44" textAnchor="middle" fontSize="24" fontWeight="bold" fontFamily={sans} fill="#fff">T</text></Ico> },
  { name: 'eye', icon: <Ico><rect x="0" y="0" width="64" height="32" fill="#6f8a9c" /><rect x="0" y="32" width="64" height="32" rx="3" fill="#3f7ab8" /><path d="M18 32A14 18 0 0 0 46 32Z" fill="#fff" /><ellipse cx="32" cy="34" rx="8" ry="12" fill="#0a0a0a" /></Ico> },
  { name: 'console', icon: <Ico><rect x="3" y="3" width="58" height="58" rx="3" fill="#1a1a1a" stroke="#999" strokeWidth="1.5" /><text x="6" y="27" fontSize="17" textLength="53" lengthAdjust="spacingAndGlyphs" fontFamily={mono} fill="#e8c02e">WARNIN</text><text x="6" y="50" fontSize="17" textLength="53" lengthAdjust="spacingAndGlyphs" fontFamily={mono} fill="#e8c02e">AY 7:36</text></Ico> },
  { name: 'monitor', icon: <Ico><rect x="3" y="3" width="58" height="58" rx="3" fill="#0e1412" stroke="#999" strokeWidth="1.5" /><path d="M15 4V60M27 4V60M39 4V60M51 4V60M4 15H60M4 27H60M4 39H60M4 51H60" stroke="#22413a" /><path d="M8 36H24L28 34L31 44L35 18L38 40L42 34H56" fill="none" stroke="#57a896" strokeWidth="1.6" /></Ico> },
  { name: 'terminal', running: true, icon: <Ico><rect x="3" y="3" width="58" height="58" rx="3" fill="#1e1e1e" stroke="#999" strokeWidth="1.5" /><text x="8" y="22" fontSize="18" fontFamily={mono} fill="#fff">&gt;_</text></Ico> },
  { name: 'forgerock', icon: <FrMark className="w-[64px] h-[64px] text-[#0c0c0c]" /> },
];

const Dock = () => (
  <div className="flex-1 mt-[2px] ml-[52px] mr-[53px] rounded-t-[14px] flex items-start pl-[5px] pt-[10px] bg-[linear-gradient(90deg,#a8835c_0%,#957658_12%,#ab7e52_22%,#b47f4f_45%,#b4804f_55%,#a57c54_66%,#7f6451_74%,#7d6250_84%,#8e6d50_92%,#ad8055_100%)]">
    {dockIcons.map((d) => (
      <div key={d.name} className="w-[71px] shrink-0 flex flex-col items-center">
        <div className="w-[64px] h-[64px] flex items-center justify-center">{d.icon}</div>
        {d.running && <span className="mt-[3px] w-[6px] h-[6px] rounded-full bg-[#260a05]" />}
      </div>
    ))}
    <span className="ml-[15px] w-[2px] h-[66px] bg-[#6e4f36]" />
    <div className="ml-[16px]">
      <svg viewBox="0 0 64 64" className="w-[64px] h-[64px]">
        <path d="M14 10H50L45 62H19Z" fill="#eceae7" stroke="#cfcfcf" />
        <ellipse cx="32" cy="10" rx="18" ry="5" fill="#bdbdbd" />
        <path d="M22 8L26 2L30 8M32 8L36 2L40 8" fill="#3b4b5c" />
      </svg>
    </div>
  </div>
);

const App = () => (
  <div className="w-[2560px] h-[1600px] flex flex-col overflow-hidden font-['Inter',sans-serif] bg-[linear-gradient(180deg,#0a0a0a_0%,#0a0a0a_90%,#3a3230_95%,#7a624f_98%,#c59a6f_100%)]">
    <MenuBar />
    <div className="h-[1464px] mt-[2px] shrink-0 flex flex-col overflow-hidden rounded-t-[8px] rounded-b-[14px]">
      <TabStrip />
      <UrlBar />
      <BookmarksBar />
      <NavBar />
      <SubHeader />
      <div className="flex-1 min-h-0 flex font-['Liberation_Sans',sans-serif]">
        <Sidebar />
        <Workspace />
      </div>
      <Footer />
    </div>
    <Dock />
  </div>
);

export default App;
